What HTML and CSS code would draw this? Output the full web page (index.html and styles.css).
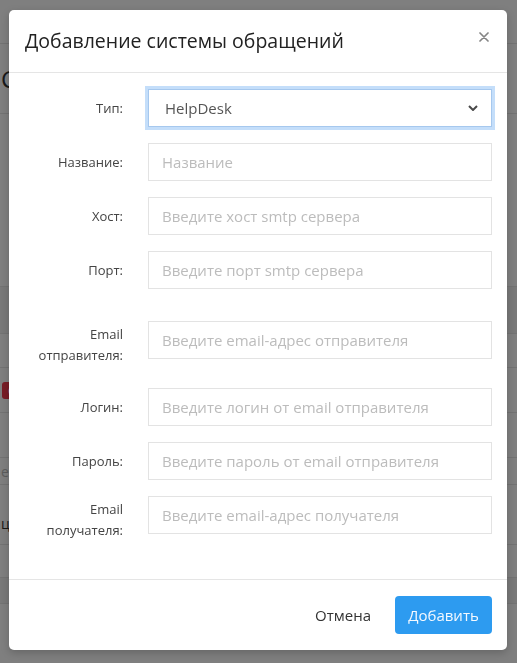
FILE: index.html
```html
<!DOCTYPE html>
<html lang="ru">
<head>
    <meta charset="UTF-8">
    <meta name="viewport" content="width=device-width, initial-scale=1.0">
    <title>Системы обращений</title>
    <link rel="stylesheet" href="styles.css">
</head>
<body>
    <!-- страница под модальным окном -->
    <div class="page">
        <div class="page-top"></div>
        <h2 class="page-title">Си</h2>
        <div class="page-row" style="height: 173px"></div>
        <div class="page-row shaded" style="height: 47px"></div>
        <div class="page-row" style="height: 34px"></div>
        <div class="page-row" style="height: 45px"><span class="badge">Off</span></div>
        <div class="page-row" style="height: 45px"></div>
        <div class="page-row muted" style="height: 27px">e</div>
        <div class="page-row low" style="height: 60px">ци</div>
        <div class="page-row" style="height: 33px"></div>
        <div class="page-row shaded" style="height: 26px"></div>
    </div>

    <div class="backdrop"></div>

    <div class="modal">
        <div class="modal-header">
            <h4 class="modal-title">Добавление системы обращений</h4>
            <button class="close" type="button">
                <svg width="10" height="10" viewBox="0 0 10 10">
                    <path d="M1 1 L9 9 M9 1 L1 9" stroke="#858585" stroke-width="1.7" stroke-linecap="round"/>
                </svg>
            </button>
        </div>

        <form class="modal-body">
            <div class="form-row">
                <label class="form-label">Тип:</label>
                <div class="select-wrap">
                    <select class="form-control select">
                        <option>HelpDesk</option>
                        <option>Jira</option>
                        <option>Redmine</option>
                    </select>
                    <svg class="chevron" width="10" height="6" viewBox="0 0 10 6">
                        <path d="M1 1 L5 5 L9 1" fill="none" stroke="#4a4a4a" stroke-width="2"/>
                    </svg>
                </div>
            </div>
            <div class="form-row">
                <label class="form-label">Название:</label>
                <input class="form-control" type="text" placeholder="Название">
            </div>
            <div class="form-row">
                <label class="form-label">Хост:</label>
                <input class="form-control" type="text" placeholder="Введите хост smtp сервера">
            </div>
            <div class="form-row">
                <label class="form-label">Порт:</label>
                <input class="form-control" type="text" placeholder="Введите порт smtp сервера">
            </div>
            <div class="form-row spaced">
                <label class="form-label two-line">Email отправителя:</label>
                <input class="form-control" type="text" placeholder="Введите email-адрес отправителя">
            </div>
            <div class="form-row">
                <label class="form-label">Логин:</label>
                <input class="form-control" type="text" placeholder="Введите логин от email отправителя">
            </div>
            <div class="form-row">
                <label class="form-label">Пароль:</label>
                <input class="form-control" type="password" placeholder="Введите пароль от email отправителя">
            </div>
            <div class="form-row">
                <label class="form-label two-line">Email получателя:</label>
                <input class="form-control" type="text" placeholder="Введите email-адрес получателя">
            </div>
        </form>

        <div class="modal-footer">
            <button class="btn btn-link" type="button">Отмена</button>
            <button class="btn btn-primary" type="button">Добавить</button>
        </div>
    </div>
</body>
</html>
```

FILE: styles.css
```css
* {
    box-sizing: border-box;
}
body {
    margin: 0;
    font-family: "Open Sans", "Noto Sans", sans-serif;
    color: #333;
    background: #fff;
    height: 663px;
    overflow: hidden;
}

/* страница за окном */
.page {
    width: 517px;
}
.page-top {
    height: 44px;
    border-bottom: 1px solid #e6e6e6;
}
.page-title {
    margin: 0;
    padding-left: 1px;
    height: 70px;
    line-height: 70px;
    font-size: 24px;
    font-weight: 400;
    border-bottom: 1px solid #e6e6e6;
}
.page-row {
    border-bottom: 1px solid #e6e6e6;
    font-size: 14px;
    padding-left: 1px;
    display: flex;
    align-items: center;
}
.page-row.shaded {
    background: #f2f2f2;
}
.page-row.muted {
    color: #bbb;
}
.page-row.low {
    padding-top: 18px;
}
.badge {
    margin-left: 1px;
    background: #f03a4c;
    color: #fff;
    font-size: 11px;
    padding: 1px 6px;
    border-radius: 3px;
}

.backdrop {
    position: fixed;
    inset: 0;
    background: rgba(0, 0, 0, 0.5);
}

/* модальное окно */
.modal {
    position: absolute;
    top: 10px;
    left: 9px;
    width: 498px;
    background: #fff;
    border-radius: 5px;
    box-shadow: 0 3px 9px rgba(0, 0, 0, 0.2);
}
.modal-header {
    display: flex;
    justify-content: space-between;
    align-items: flex-start;
    padding: 15px 18px 15px 16px;
    border-bottom: 1px solid #e5e5e5;
}
.modal-title {
    margin: 0;
    font-size: 19.5px;
    font-weight: 400;
    line-height: 32px;
    color: #222;
}
.close {
    margin-top: 7px;
    padding: 0;
    border: 0;
    background: none;
    width: 10px;
    height: 10px;
    display: flex;
    cursor: pointer;
}

.modal-body {
    margin: 0;
    padding: 16px 15px;
    display: flex;
    flex-direction: column;
}
.form-row {
    display: grid;
    grid-template-columns: 99px 1fr;
    column-gap: 25px;
    align-items: start;
    margin-bottom: 16px;
}
.form-row.spaced {
    margin-top: 16px;
}
.form-label {
    text-align: right;
    font-size: 13px;
    line-height: 20px;
    padding-top: 9px;
    color: #444;
}
.form-label.two-line {
    line-height: 21px;
    padding: 3px 0 6px;
}
.form-control {
    width: 100%;
    height: 38px;
    padding: 0 13px;
    border: 1px solid #e3e3e3;
    border-radius: 0;
    font-family: inherit;
    font-size: 15px;
    color: #555;
    background: #fff;
    outline: none;
}
.form-control::placeholder {
    color: #bcbcbc;
}

.select-wrap {
    position: relative;
}
.select {
    appearance: none;
    padding-left: 16px;
    border-color: #a6c8ee;
    box-shadow: 0 0 0 3px #c4defa;
}
.chevron {
    position: absolute;
    right: 14px;
    top: 16px;
    pointer-events: none;
}

.modal-footer {
    display: flex;
    justify-content: flex-end;
    align-items: center;
    gap: 12px;
    padding: 16px 15px;
    border-top: 1px solid #e5e5e5;
}
.btn {
    height: 38px;
    padding: 0 12px;
    border: 0;
    border-radius: 4px;
    font-family: inherit;
    font-size: 15px;
    cursor: pointer;
}
.btn-link {
    background: none;
    color: #333;
}
.btn-primary {
    width: 97px;
    background: #2d9bf0;
    color: #f4f9ff;
}
.btn-primary:hover {
    background: #1f8ad9;
}
```
